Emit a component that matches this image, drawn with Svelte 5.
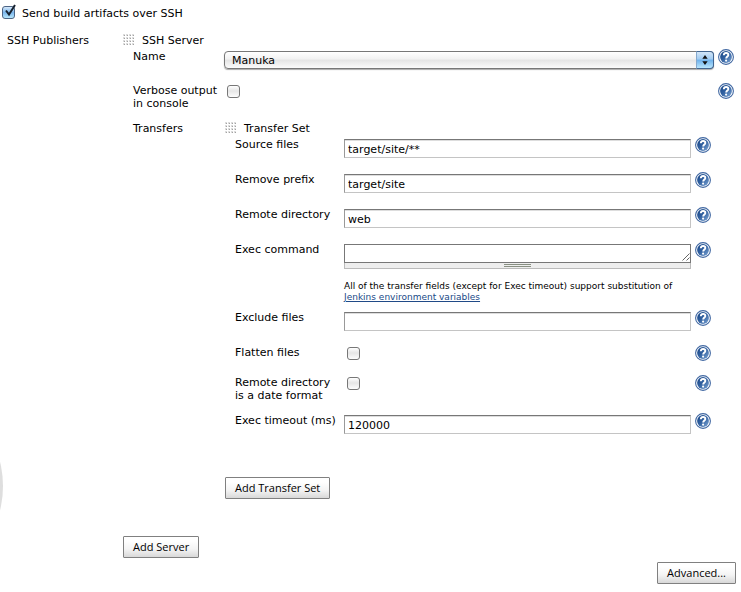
<script>
  let enabled = $state(true);
  let verbose = $state(false);
  let flatten = $state(false);
  let dated = $state(false);
  let sourceFiles = $state('target/site/**');
  let removePrefix = $state('target/site');
  let remoteDirectory = $state('web');
  let command = $state('');
  let excludes = $state('');
  let timeout = $state('120000');
</script>

{#snippet help(topic)}
  <button class="help" type="button" aria-label="Help for {topic}">
    <svg viewBox="0 0 16 16" width="16" height="16" aria-hidden="true">
      <defs>
        <linearGradient id="disc" x1="0" y1="0" x2="1" y2="1">
          <stop offset="0" stop-color="#164485" />
          <stop offset="0.45" stop-color="#2f5f9f" />
          <stop offset="1" stop-color="#7fa6d4" />
        </linearGradient>
      </defs>
      <circle cx="8" cy="8" r="7.4" fill="#fff" stroke="#4168a2" stroke-width="1.1" />
      <circle cx="8" cy="8" r="5.9" fill="url(#disc)" />
      <path d="M5.8 6.2C5.9 4.7 6.9 4 8.1 4c1.3 0 2.2.7 2.2 1.9 0 1.6-2.1 1.7-2.1 3.7" fill="none" stroke="#fff" stroke-width="1.9" />
      <circle cx="8.1" cy="11.6" r="1.1" fill="#fff" />
    </svg>
  </button>
{/snippet}

{#snippet grip()}
  <svg class="grip" viewBox="0 0 12 12" width="12" height="12" aria-hidden="true">
    {#each [0, 3, 6, 9] as y}
      {#each [0, 3, 6, 9] as x}
        <rect {x} {y} width="2" height="2" fill="#dcdcdc" />
        <rect x={x + 1} y={y + 1} width="1" height="1" fill="#a2a2a2" />
      {/each}
    {/each}
  </svg>
{/snippet}

<main>
  <label class="enable">
    <span class="checkwrap">
      <input type="checkbox" bind:checked={enabled} />
      {#if enabled}
        <svg class="tick" viewBox="0 0 14 15" width="14" height="15" aria-hidden="true">
          <path d="M3 6.5L6 10.5L12 1" fill="none" stroke="#17222f" stroke-width="2" />
        </svg>
      {/if}
    </span>
    Send build artifacts over SSH
  </label>

  <section class="publishers">
    <div>SSH Publishers</div>
    <div class="server">
      <div class="title">{@render grip()}SSH Server</div>

      <div class="fields">
        <div class="row wide">
          <label for="server">Name</label>
          <div class="selectbox">
            <select id="server"><option>Manuka</option></select>
            <svg class="stepper" viewBox="0 0 18 18" width="18" height="18" aria-hidden="true">
              <path d="M6 7.5L9 3.5L12 7.5ZM6 10.5L9 14.5L12 10.5Z" fill="#111" />
            </svg>
          </div>
          {@render help('Name')}
        </div>
        <div class="row wide verbose">
          <label for="verbose">Verbose output in console</label>
          <input id="verbose" type="checkbox" bind:checked={verbose} />
          {@render help('Verbose output in console')}
        </div>
        <div class="transfers">
          <div>Transfers</div>
          <div class="set">
            <div class="title">{@render grip()}Transfer Set</div>
            <div class="fields">
              <div class="row">
                <label for="source">Source files</label>
                <input id="source" type="text" bind:value={sourceFiles} />
                {@render help('Source files')}
              </div>
              <div class="row">
                <label for="prefix">Remove prefix</label>
                <input id="prefix" type="text" bind:value={removePrefix} />
                {@render help('Remove prefix')}
              </div>
              <div class="row">
                <label for="remote">Remote directory</label>
                <input id="remote" type="text" bind:value={remoteDirectory} />
                {@render help('Remote directory')}
              </div>
              <div class="row command">
                <label for="command">Exec command</label>
                <div>
                  <div class="area">
                    <textarea id="command" rows="1" bind:value={command}></textarea>
                    <svg class="corner" viewBox="0 0 8 8" width="8" height="8" aria-hidden="true">
                      <path d="M0.5 7.5L7.5 0.5M4.5 7.5L7.5 4.5" stroke="#666" fill="none" />
                    </svg>
                  </div>
                  <div class="drag"><span></span></div>
                  <p>
                    All of the transfer fields (except for Exec timeout) support substitution of
                    <a href="#variables">Jenkins environment variables</a>
                  </p>
                </div>
                {@render help('Exec command')}
              </div>
              <div class="row">
                <label for="excludes">Exclude files</label>
                <input id="excludes" type="text" bind:value={excludes} />
                {@render help('Exclude files')}
              </div>
              <div class="row flatten">
                <label for="flatten">Flatten files</label>
                <input id="flatten" type="checkbox" bind:checked={flatten} />
                {@render help('Flatten files')}
              </div>
              <div class="row dated">
                <label for="dated">Remote directory is a date format</label>
                <input id="dated" type="checkbox" bind:checked={dated} />
                {@render help('Remote directory is a date format')}
              </div>
              <div class="row">
                <label for="timeout">Exec timeout (ms)</label>
                <input id="timeout" type="text" bind:value={timeout} />
                {@render help('Exec timeout')}
              </div>
            </div>
            <button class="push" type="button">Add Transfer Set</button>
          </div>
        </div>
      </div>
      <button class="push" type="button">Add Server</button>
    </div>
  </section>

  <footer><button class="push" type="button">Advanced...</button></footer>
  <div class="edge"></div>
</main>

<style>
  :global(body) {
    margin: 0;
    background: #fff;
  }
  main {
    position: relative;
    overflow: hidden;
    padding: 6px 5px 8px 2px;
    font: 11px/13px Verdana, 'DejaVu Sans', sans-serif;
    color: #000;
  }
  input,
  select,
  textarea {
    box-sizing: border-box;
    margin: 0;
    border-radius: 0;
    font: inherit;
    color: inherit;
  }
  .enable {
    display: flex;
    gap: 7px;
    height: 28px;
    line-height: 16px;
  }
  .checkwrap {
    position: relative;
    width: 13px;
    height: 13px;
    display: flex;
  }
  .tick {
    position: absolute;
    left: 1px;
    top: -2px;
  }
  input[type='checkbox'] {
    appearance: none;
    width: 13px;
    height: 13px;
    border: 1px solid #777;
    border-radius: 3px;
    background: linear-gradient(#fff, #e6e6e6 45%, #fdfdfd);
  }
  .row input[type='checkbox'] {
    margin: 1px 0 0 3px;
  }
  .enable input:checked {
    border-color: #4c6484;
    background: linear-gradient(#d5e8fa, #7bb6ec 50%, #b5e6fc);
  }
  .publishers {
    display: grid;
    grid-template-columns: 116px 1fr;
    margin: 0 2px 0 5px;
  }
  .title {
    display: flex;
    gap: 7px;
    height: 16px;
  }
  .fields {
    margin-left: 10px;
  }
  .row {
    display: grid;
    grid-template-columns: 105px 1fr 16px;
    column-gap: 4px;
    align-items: start;
    min-height: 35px;
  }
  .set .row {
    margin-right: 23px;
  }
  .row.wide {
    grid-template-columns: 87px 1fr 16px;
    min-height: 34px;
  }
  .row.verbose {
    min-height: 38px;
  }
  .row.flatten {
    min-height: 30px;
  }
  .row.dated {
    min-height: 38px;
  }
  .row.command {
    min-height: 68px;
  }
  .transfers {
    display: grid;
    grid-template-columns: 92px 1fr;
  }
  .help {
    width: 16px;
    height: 16px;
    margin-top: -1px;
    padding: 0;
    border: 0;
    background: none;
  }
  .help svg,
  .grip {
    display: block;
  }
  .selectbox {
    position: relative;
    margin-top: 1px;
  }
  select {
    appearance: none;
    display: block;
    width: 100%;
    height: 18px;
    padding: 0 24px 0 7px;
    border: 1px solid #777;
    border-radius: 4px;
    background: linear-gradient(#fff, #f1f1f1 45%, #e4e4e4 50%, #fbfbfb);
    box-shadow: 0 1px 1px #aaa;
  }
  .stepper {
    position: absolute;
    top: 0;
    right: 0;
    box-sizing: border-box;
    border: 1px solid #426590;
    border-left-color: #85a9cd;
    border-radius: 0 4px 4px 0;
    background: linear-gradient(#d3e6f8, #a0cbf2 45%, #6eb1eb 50%, #b9e6fd);
    pointer-events: none;
  }
  input[type='text'] {
    width: 100%;
    height: 19px;
    margin-top: 1px;
    padding: 1px 3px 0;
    border: 1px solid #c4c4c4;
    border-top: 1px solid #777;
    border-left-color: #999;
    box-shadow: inset 0 1px #ddd;
    background: #fff;
  }
  .area {
    position: relative;
    margin-top: 1px;
  }
  textarea {
    display: block;
    width: 100%;
    height: 19px;
    padding: 2px 3px;
    border: 1px solid #777;
    resize: none;
    overflow: hidden;
  }
  .corner {
    position: absolute;
    right: 1px;
    bottom: 2px;
  }
  .drag {
    display: flex;
    justify-content: center;
    align-items: center;
    height: 5px;
    border: 1px solid #bbb;
    border-top: 0;
    background: #eee;
  }
  .drag span {
    width: 27px;
    height: 1px;
    border: solid #899083;
    border-width: 1px 0;
  }
  p {
    margin: 12px 0 0;
    font-size: 9px;
    line-height: 11px;
  }
  a {
    color: #204a87;
  }
  .push {
    display: block;
    height: 22px;
    padding: 0 9px;
    border: 1px solid #808080;
    border-radius: 1px;
    background: linear-gradient(#fff 20%, #f4f4f4 60%, #d8d8d8);
    font: 11px/18px 'Lucida Grande', 'Open Sans', sans-serif;
    color: #000;
  }
  .set > .push {
    margin-top: 28px;
  }
  .server > .push {
    margin-top: 37px;
  }
  footer {
    display: flex;
    justify-content: flex-end;
    margin-top: 4px;
  }
  .edge {
    position: absolute;
    left: -197px;
    top: 386px;
    width: 200px;
    height: 200px;
    border-radius: 50%;
    background: #dedede;
  }
</style>
